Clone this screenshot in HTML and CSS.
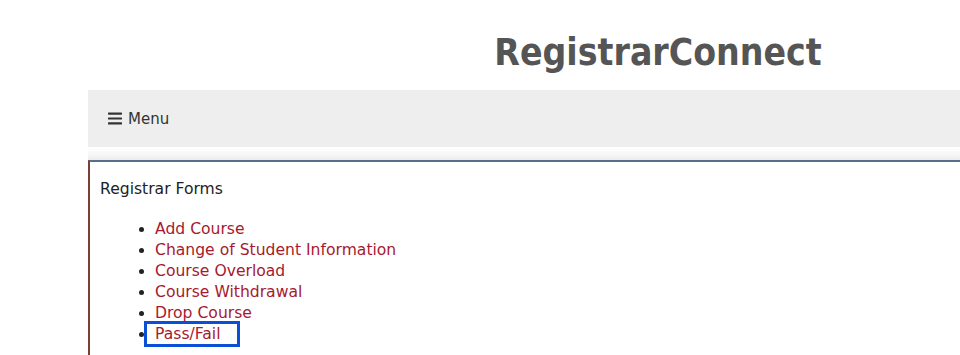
FILE: index.html
```html
<!DOCTYPE html>
<html lang="en">
<head>
<meta charset="utf-8">
<title>RegistrarConnect</title>
<link rel="stylesheet" href="styles.css">
</head>
<body>
<div class="page">
  <header class="site-header">
    <h1 class="site-title">RegistrarConnect</h1>
  </header>
  <nav class="navbar">
    <a class="menu-toggle" href="#">
      <svg class="menu-icon" width="14" height="13" viewBox="0 0 14 13" aria-hidden="true">
        <rect x="0" y="0.5" width="14" height="2.2" rx="0.6"/>
        <rect x="0" y="5.4" width="14" height="2.2" rx="0.6"/>
        <rect x="0" y="10.3" width="14" height="2.2" rx="0.6"/>
      </svg>
      <span>Menu</span>
    </a>
  </nav>
  <div class="nav-shadow"></div>
  <main class="content">
    <p class="section-title">Registrar Forms</p>
    <ul class="form-list">
      <li><a href="#">Add Course</a></li>
      <li><a href="#">Change of Student Information</a></li>
      <li><a href="#">Course Overload</a></li>
      <li><a href="#">Course Withdrawal</a></li>
      <li><a href="#">Drop Course</a></li>
      <li><a href="#" class="focused">Pass/Fail</a></li>
    </ul>
  </main>
</div>
</body>
</html>
```
FILE: styles.css
```css
html, body {
  margin: 0;
  padding: 0;
  background: #ffffff;
  overflow: hidden;
}
body {
  font-family: "DejaVu Sans", sans-serif;
  color: #222222;
}
.page {
  margin-left: 88px;
  width: 1140px;
}
.site-header {
  height: 90px;
  display: flex;
  align-items: center;
  justify-content: center;
  padding-top: 14px;
  box-sizing: border-box;
}
.site-title {
  margin: 0;
  font-family: "DejaVu Sans Condensed", "DejaVu Sans", sans-serif;
  font-size: 37px;
  font-weight: bold;
  color: #555555;
}
.navbar {
  height: 57px;
  background: #eeeeee;
  display: flex;
  align-items: center;
  padding-left: 20px;
}
.menu-toggle {
  display: flex;
  align-items: center;
  gap: 6px;
  color: #333333;
  text-decoration: none;
  font-size: 15px;
}
.menu-icon {
  fill: #333333;
}
.nav-shadow {
  height: 13px;
  background: linear-gradient(#ffffff, #f6f6f6 60%, #ececec);
}
.content {
  border-top: 2px solid #5b6d8a;
  border-left: 2px solid #7b3f33;
  padding: 17px 10px 16px;
  min-height: 300px;
}
.section-title {
  margin: 0;
  font-size: 15.6px;
  line-height: 21px;
}
.form-list {
  margin: 19px 0 0;
  padding-left: 55px;
  font-size: 15.6px;
  line-height: 21px;
}
.form-list a {
  color: #a6192e;
  text-decoration: none;
}
.form-list a.focused {
  outline: 3px solid #0a4fd6;
  outline-offset: 0;
  padding: 1px 16px 1px 8px;
  margin-left: -8px;
}
```
